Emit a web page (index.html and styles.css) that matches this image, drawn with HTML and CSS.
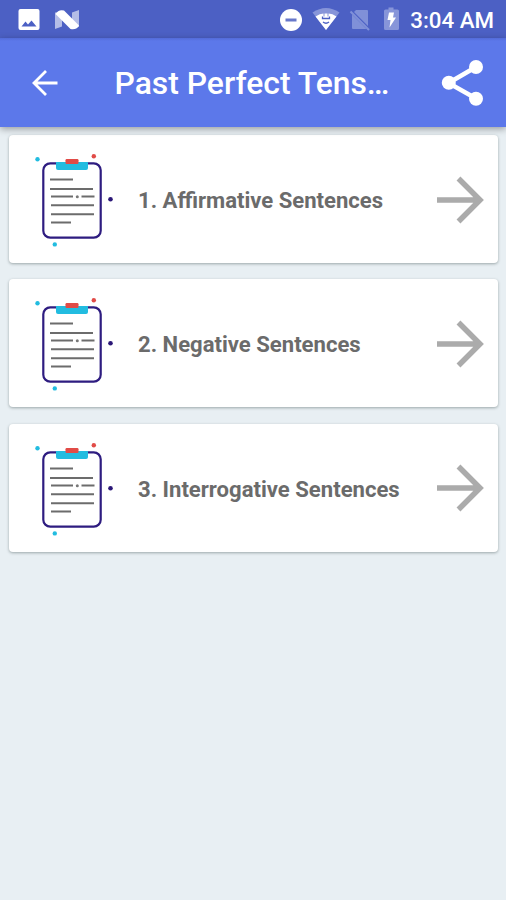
FILE: index.html
```html
<!DOCTYPE html>
<html lang="en">
<head>
<meta charset="utf-8">
<title>Past Perfect Tense</title>
<link rel="stylesheet" href="styles.css">
</head>
<body>
<svg class="defs" width="0" height="0" aria-hidden="true">
  <symbol id="clipboard" viewBox="30 150 90 100">
    <rect x="43.3" y="163.3" width="57.4" height="74.4" rx="7" fill="none" stroke="#2e1c80" stroke-width="2.2"/>
    <path d="M56 162h32v6q0 2-2 2H58q-2 0-2-2z" fill="#22bce0"/>
    <rect x="65.5" y="159" width="13" height="5" rx="1.2" fill="#e14b47"/>
    <path d="M50 179.500h23M50 189h43M51 196.500h22M81.500 196.500h13M51 205.200h43M51 214.200h43M51 222.600h20" stroke="#6c6c6c" stroke-width="2"/>
    <circle cx="77.300" cy="196.700" r="1.500" fill="#777"/>
    <circle cx="37.500" cy="159.200" r="2.200" fill="#22bce0"/>
    <circle cx="93.800" cy="156.200" r="2.200" fill="#e14b47"/>
    <circle cx="110.500" cy="199.200" r="2.300" fill="#2b1777"/>
    <circle cx="54.800" cy="244.400" r="2.200" fill="#22bce0"/>
  </symbol>
  <symbol id="arrow" viewBox="0 0 48 48">
    <path d="M1 24H44M22.500 2.500 44 24 22.500 45.500" fill="none" stroke="#ababab" stroke-width="5.500"/>
  </symbol>
</svg>
<div class="status">
  <svg class="notes" width="66" height="24" viewBox="16 8 66 24">
    <path fill="#fff" fill-rule="evenodd" d="M20.500 9h17q2 0 2 2v17q0 2-2 2h-17q-2 0-2-2V11q0-2 2-2zM21.500 26.500h15l-5-6-3.500 4-2.500-3z"/>
    <path fill="#b4bde7" d="M55 12.500h7v14l-7 2.500zM72 12.500l7-2.500v17h-7z"/>
    <path fill="#fff" d="M55.500 14q3-5 8.500-3.500L79 25.500q-3 5-8.500 3.500z"/>
  </svg>
  <div class="system">
    <svg width="126" height="26" viewBox="277 7 126 26">
      <circle cx="291" cy="20" r="11" fill="#fff"/>
      <rect x="285.500" y="18.500" width="11" height="3" fill="#6878ca"/>
      <path fill="#8795d9" d="M312.500 12.500q13.500-9 27 0L326 30z"/>
      <path fill="#fff" d="M315.500 16.500q4.500-3 8-3v3h1v-3h3v3h1v-3q4 0 8 3L326 30z"/>
      <path fill="none" stroke="#4c60c4" stroke-width="1.300" d="M322.500 16.500v2h7v-2M323 22q3 2.500 6 0"/>
      <path fill="#8090d8" d="M356 10h11q1 0 1 1v15L354 12zM352 14.500l14.500 14.500H353q-1 0-1-1z"/>
      <path stroke="#8090d8" stroke-width="2" d="M350.500 11.500 369 30"/>
      <path fill="#8795d9" d="M388.500 7.500h5V9.500h4q1.500 0 1.500 1.500v17.500q0 1.500-1.500 1.500h-12q-1.500 0-1.500-1.500V11q0-1.500 1.500-1.500h3z"/>
      <path fill="#fff" d="M389 12.500h5l-1 5h3l-6.500 10 1-7.500h-3z"/>
    </svg>
    <span class="clock">3:04 AM</span>
  </div>
</div>
<header class="bar">
  <svg class="back" width="28" height="28" viewBox="0 0 28 28"><path d="M26.500 14H3M15 2 3 14 15 26" fill="none" stroke="#fff" stroke-width="2.800"/></svg>
  <h1>Past Perfect Tens…</h1>
  <svg class="share" width="44" height="48" viewBox="441 59 44 48"><path d="M476 67 448.500 83 476 98.500" fill="none" stroke="#fff" stroke-width="4.500"/><g fill="#fff"><circle cx="476" cy="67" r="7"/><circle cx="448.800" cy="82.700" r="7"/><circle cx="476" cy="98.700" r="7"/></g></svg>
</header>
<main class="list">
  <div class="card"><svg class="clip"><use href="#clipboard"/></svg><span class="label">1. Affirmative Sentences</span><svg class="go"><use href="#arrow"/></svg></div>
  <div class="card"><svg class="clip"><use href="#clipboard"/></svg><span class="label">2. Negative Sentences</span><svg class="go"><use href="#arrow"/></svg></div>
  <div class="card"><svg class="clip"><use href="#clipboard"/></svg><span class="label">3. Interrogative Sentences</span><svg class="go"><use href="#arrow"/></svg></div>
</main>
</body>
</html>
```
FILE: styles.css
```css
* { box-sizing: border-box; }
body {
  margin: 0;
  height: 900px;
  overflow: hidden;
  background: #e8eff3;
  font-family: Roboto, "Liberation Sans", sans-serif;
  display: flex;
  flex-direction: column;
}
svg { display: block; flex: none; }
.defs { height: 0; flex: 0 0 0; }
.status {
  height: 38px;
  flex: none;
  background: #4c60c4;
  display: flex;
  justify-content: space-between;
  align-items: flex-start;
  padding: 7px 12px 0 16px;
}
.notes { margin-top: 1px; }
.system { display: flex; align-items: center; gap: 7px; }
.clock {
  color: #fff;
  font-size: 22.300px;
  font-weight: 500;
  line-height: 26px;
  white-space: nowrap;
}
.bar {
  height: 89px;
  flex: none;
  background: linear-gradient(#536bd9, #5c78ea 3px);
  box-shadow: 0 2px 7px rgba(0, 0, 0, .35);
  display: flex;
  align-items: center;
  padding: 0 21px 0 31px;
  z-index: 1;
}
h1 {
  flex: 1;
  margin: 0 0 0 55.500px;
  color: #fff;
  font-size: 31.850px;
  line-height: 40px;
  font-weight: 500;
  white-space: nowrap;
}
.list {
  display: flex;
  flex-direction: column;
  gap: 16.300px;
  padding: 8px 8px 0 9px;
}
.card {
  height: 128px;
  flex: none;
  background: #fff;
  border-radius: 4px;
  box-shadow: 0 1px 3px rgba(40, 60, 60, .4);
  display: flex;
  align-items: center;
  padding: 0 14px 0 21px;
}
.clip { width: 90px; height: 100px; margin-top: 2px; }
.label {
  flex: 1;
  margin: 4px 0 0 18px;
  color: #6b6b6b;
  font-size: 22.080px;
  line-height: 28px;
  font-weight: 700;
  white-space: nowrap;
}
.go { width: 48px; height: 48px; margin-top: 1px; }
```
